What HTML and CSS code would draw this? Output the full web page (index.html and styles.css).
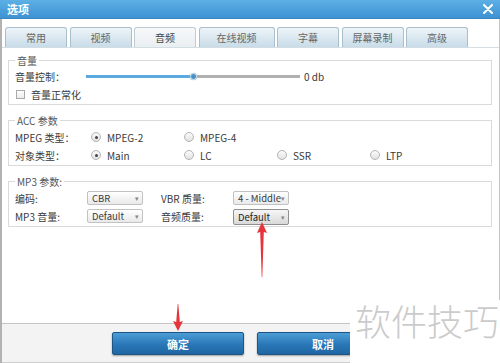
FILE: index.html
```html
<!DOCTYPE html>
<html lang="zh-CN">

<head>
    <meta charset="UTF-8">
    <meta name="viewport" content="width=device-width, initial-scale=1.0">
    <title>选项</title>
    <link rel="stylesheet" href="styles.css">
</head>

<body>
    <div class="dialog">
        <div class="titlebar">
            <span class="title">选项</span>
            <svg class="close" width="10" height="10" viewBox="0 0 10 10">
                <path d="M1 1 L9 9 M9 1 L1 9" stroke="#fff" stroke-width="2" stroke-linecap="round" />
            </svg>
        </div>

        <div class="body">
            <div class="tabs">
                <div class="tab">常用</div>
                <div class="tab">视频</div>
                <div class="tab active">音频</div>
                <div class="tab wide">在线视频</div>
                <div class="tab">字幕</div>
                <div class="tab">屏幕录制</div>
                <div class="tab">高级</div>
            </div>

            <div class="panel">
                <!-- 音量 -->
                <fieldset class="group first">
                    <legend>音量</legend>
                    <div class="row">
                        <span class="label">音量控制：</span>
                        <div class="slider">
                            <div class="track-fill"></div>
                            <div class="thumb"></div>
                            <div class="track-rest"></div>
                        </div>
                        <span class="db">0 db</span>
                    </div>
                    <div class="row">
                        <span class="checkbox"></span>
                        <span class="check-label">音量正常化</span>
                    </div>
                </fieldset>

                <!-- ACC -->
                <fieldset class="group">
                    <legend>ACC 参数</legend>
                    <div class="row">
                        <span class="label">MPEG 类型：</span>
                        <label class="opt"><span class="radio checked"></span>MPEG-2</label>
                        <label class="opt"><span class="radio"></span>MPEG-4</label>
                    </div>
                    <div class="row">
                        <span class="label">对象类型：</span>
                        <label class="opt"><span class="radio checked"></span>Main</label>
                        <label class="opt"><span class="radio"></span>LC</label>
                        <label class="opt"><span class="radio"></span>SSR</label>
                        <label class="opt"><span class="radio"></span>LTP</label>
                    </div>
                </fieldset>

                <!-- MP3 -->
                <fieldset class="group">
                    <legend>MP3 参数:</legend>
                    <div class="row">
                        <span class="label">编码:</span>
                        <div class="select"><span>CBR</span><span class="caret">▾</span></div>
                        <span class="label second">VBR 质量:</span>
                        <div class="select"><span>4 - Middle</span><span class="caret">▾</span></div>
                    </div>
                    <div class="row">
                        <span class="label">MP3 音量:</span>
                        <div class="select"><span>Default</span><span class="caret">▾</span></div>
                        <span class="label second">音频质量:</span>
                        <div class="select focused"><span>Default</span><span class="caret">▾</span></div>
                    </div>
                </fieldset>
            </div>

            <div class="footer">
                <button class="btn">确定</button>
                <button class="btn">取消</button>
            </div>
        </div>

        <!-- annotation arrows -->
        <svg class="arrow arrow-up" width="12" height="58" viewBox="0 0 12 58">
            <path d="M6 1 L11 12 L7.8 11 L6.3 56 L5.7 56 L4.2 11 L1 12 Z" fill="#e5343c" />
        </svg>
        <svg class="arrow arrow-down" width="12" height="30" viewBox="0 0 12 30">
            <path d="M5.7 1 L6.3 1 L7.8 19 L11 18 L6 28 L1 18 L4.2 19 Z" fill="#e5343c" />
        </svg>

        <div class="watermark">软件技巧</div>
    </div>
</body>

</html>
```

FILE: styles.css
```css
/* General Reset */
body {
    margin: 0;
    font-family: "Noto Sans CJK SC", "Noto Sans", sans-serif;
    font-size: 10px;
    color: #3a3a3a;
    background-color: #fff;
}

.dialog {
    position: relative;
    width: 500px;
    height: 363px;
    overflow: hidden;
}

/* Title bar */
.titlebar {
    height: 19px;
    display: flex;
    align-items: center;
    justify-content: space-between;
    padding: 0 7px 0 7px;
    background: linear-gradient(#5cb0e6, #3d92d2);
    border-bottom: 1px solid #3a86c0;
    box-sizing: border-box;
}

.title {
    color: #fff;
    font-weight: bold;
    font-size: 11px;
}

/* Body */
.body {
    height: 344px;
    border-left: 2px solid #b2b2b2;
    border-right: 1px solid #c4c4c4;
    display: flex;
    flex-direction: column;
}

/* Tabs */
.tabs {
    display: flex;
    gap: 2.5px;
    padding: 8px 0 0 3px;
    height: 20px;
    border-bottom: 1px solid #d3dde4;
}

.tab {
    width: 62px;
    height: 20px;
    box-sizing: border-box;
    border: 1px solid #a9bfcd;
    border-bottom: none;
    border-radius: 3px 3px 0 0;
    background: linear-gradient(#eef4f8, #c8dce8);
    color: #666;
    display: flex;
    align-items: center;
    justify-content: center;
}

.tab.wide {
    width: 76px;
}

.tab.active {
    background: linear-gradient(#f7f9fb, #e9eef1);
    border-color: #c0ccd4;
    color: #444;
}

/* Panel */
.panel {
    flex: 1;
}

.group {
    margin: 9px 7px 0 6px;
    padding: 1px 6px 1px 6px;
    border: 1px solid #dadada;
    min-inline-size: 0;
}

.group.first {
    margin-top: 6px;
    padding-top: 0;
}

.group legend {
    padding: 0 2px;
    line-height: 13px;
    color: #555;
}

.row {
    height: 18px;
    display: flex;
    align-items: center;
}

.label {
    width: 72px;
    flex-shrink: 0;
}

.label.second {
    margin-left: 18px;
}

/* Slider */
.slider {
    width: 214px;
    margin-left: -1px;
    display: flex;
    align-items: center;
}

.track-fill {
    width: 104px;
    height: 3px;
    background-color: #5aa9df;
}

.thumb {
    width: 5px;
    height: 5px;
    border-radius: 50%;
    background-color: #4a8fc4;
    border: 1px solid #d7e7f2;
    box-shadow: 0 0 1px #7aa;
}

.track-rest {
    flex: 1;
    height: 3px;
    background-color: #b0b0b0;
}

.db {
    margin-left: 4px;
}

/* Checkbox */
.checkbox {
    width: 7px;
    height: 7px;
    margin-left: 1px;
    border: 1px solid #aaa;
    background: linear-gradient(#fff, #ececec);
}

.check-label {
    margin-left: 6px;
}

/* Radio */
.opt {
    width: 93px;
    display: flex;
    align-items: center;
    flex-shrink: 0;
}

.radio {
    width: 8px;
    height: 8px;
    margin: 0 6px 0 4px;
    border: 1px solid #b3b3b3;
    border-radius: 50%;
    background: linear-gradient(#fbfbfb, #e2e2e2);
    display: flex;
    align-items: center;
    justify-content: center;
}

.radio.checked::after {
    content: "";
    width: 3px;
    height: 3px;
    border-radius: 50%;
    background-color: #444;
}

/* Select */
.select {
    width: 56px;
    height: 14px;
    box-sizing: border-box;
    padding: 0 3px 0 4px;
    border: 1px solid #c2c2c2;
    border-radius: 2px;
    background: linear-gradient(#ffffff, #e9e9e9);
    display: flex;
    align-items: center;
    justify-content: space-between;
    flex-shrink: 0;
    white-space: nowrap;
    font-size: 9.5px;
}

.select.focused {
    height: 16px;
    margin-top: 2px;
    border-color: #8f8f8f;
    background: linear-gradient(#f6f6f6, #d9d9d9);
    color: #222;
}

.caret {
    font-size: 7px;
    color: #888;
    flex-shrink: 0;
}

/* Footer */
.footer {
    height: 40px;
    border-top: 1px solid #c4c4c4;
    border-bottom: 1px solid #cfcfcf;
    background-color: #f3f3f3;
    display: flex;
    justify-content: center;
    align-items: flex-start;
    gap: 13px;
    padding-top: 8px;
    box-sizing: border-box;
}

.btn {
    width: 132px;
    height: 23px;
    border: 1px solid #1d5585;
    border-radius: 2px;
    background: linear-gradient(#4b9dd6, #2a77b7 55%, #1f66a3);
    color: #fff;
    font-family: "Noto Sans CJK SC", sans-serif;
    font-size: 11px;
    font-weight: bold;
    box-shadow: 0 1px 2px rgba(0, 0, 0, 0.35);
    padding: 0;
}

/* Annotations */
.arrow {
    position: absolute;
}

.arrow-up {
    left: 256px;
    top: 221px;
}

.arrow-down {
    left: 172px;
    top: 303px;
}

.watermark {
    position: absolute;
    left: 350px;
    top: 300px;
    right: 0;
    bottom: 0;
    background-color: #fff;
    color: #cbcbcb;
    font-family: "Noto Sans CJK SC", sans-serif;
    font-size: 36px;
    font-weight: 300;
    line-height: 40px;
    padding-left: 5px;
    white-space: nowrap;
}
```
